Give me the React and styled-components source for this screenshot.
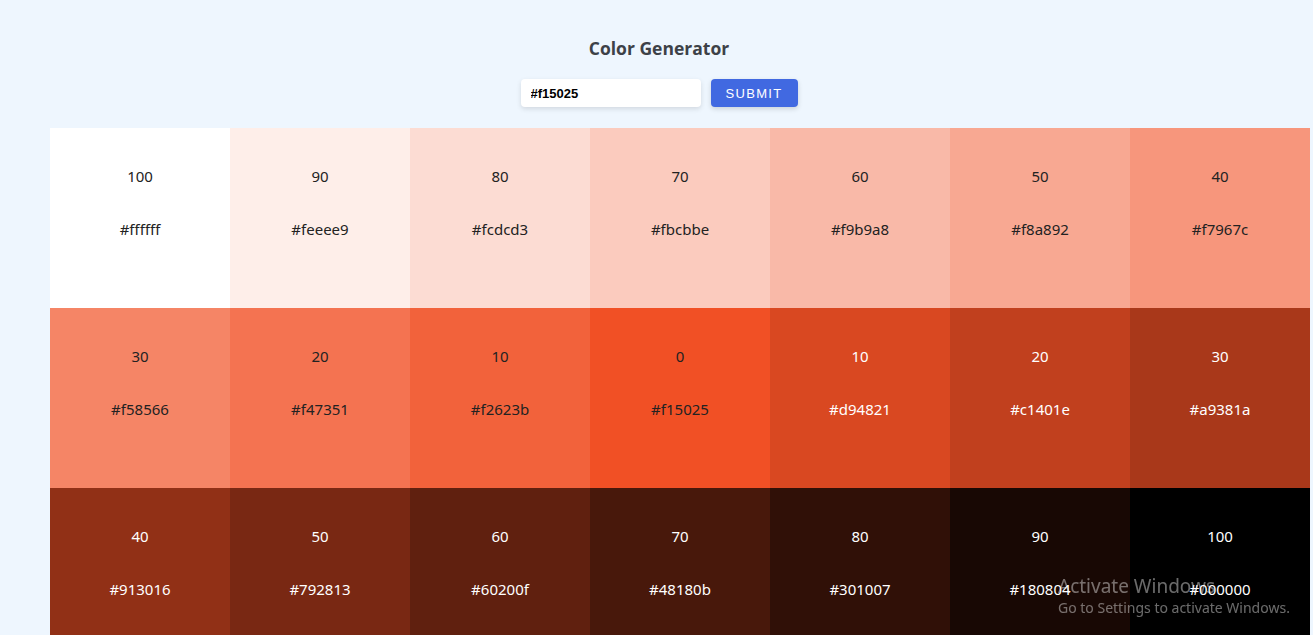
import React, { useState } from 'react'
import styled, { createGlobalStyle } from 'styled-components'

const GlobalStyle = createGlobalStyle`
  * { box-sizing: border-box; }
  body {
    margin: 0;
    background: #eef6fe;
    font-family: "Noto Sans", "Open Sans", sans-serif;
    overflow: hidden;
  }
`

const tints = ['ffffff', 'feeee9', 'fcdcd3', 'fbcbbe', 'f9b9a8', 'f8a892', 'f7967c', 'f58566', 'f47351', 'f2623b']
const shades = ['d94821', 'c1401e', 'a9381a', '913016', '792813', '60200f', '48180b', '301007', '180804', '000000']

const colors = [
  ...tints.map((hex, i) => ({ hex, weight: (10 - i) * 10, light: false })),
  { hex: 'f15025', weight: 0, light: false },
  ...shades.map((hex, i) => ({ hex, weight: (i + 1) * 10, light: true })),
]

const App = () => {
  const [value, setValue] = useState('#f15025')
  return (
    <Page>
      <GlobalStyle />
      <Header>
        <h3>Color Generator</h3>
        <Form onSubmit={(e) => e.preventDefault()}>
          <Input value={value} onChange={(e) => setValue(e.target.value)} />
          <SubmitBtn type="submit">SUBMIT</SubmitBtn>
        </Form>
      </Header>
      <Grid>
        {colors.map((c, idx) => (
          <Swatch key={idx} $bg={`#${c.hex}`} $light={c.light}>
            <p>{c.weight}</p>
            <p>#{c.hex}</p>
          </Swatch>
        ))}
      </Grid>
      <Watermark>
        <div className="big">Activate Windows</div>
        <div className="small">Go to Settings to activate Windows.</div>
      </Watermark>
    </Page>
  )
}

const Page = styled.main`
  height: 635px;
  overflow: hidden;
`

const Header = styled.section`
  display: flex;
  flex-direction: column;
  align-items: center;
  padding: 37px 0 21px 5px;

  h3 {
    margin: 0;
    font-family: "Open Sans", sans-serif;
    font-size: 17.5px;
    font-weight: 700;
    color: #3d4147;
    line-height: 22px;
  }
`

const Form = styled.form`
  display: flex;
  gap: 10px;
  margin-top: 20px;
`

const Input = styled.input`
  width: 180px;
  height: 28px;
  border: none;
  border-radius: 4px;
  background: #fff;
  padding: 0 10px;
  font-family: "Liberation Sans", Arial, sans-serif;
  font-weight: 700;
  font-size: 13px;
  color: #000;
  box-shadow: 0 2px 5px rgba(0, 0, 0, 0.12);
  outline: none;
`

const SubmitBtn = styled.button`
  width: 87px;
  height: 28px;
  border: none;
  border-radius: 4px;
  background: #4169e1;
  color: #fff;
  font-family: "Liberation Sans", Arial, sans-serif;
  font-size: 13px;
  letter-spacing: 1.3px;
  box-shadow: 0 2px 5px rgba(0, 0, 0, 0.15);
  cursor: pointer;
`

const Grid = styled.section`
  display: grid;
  grid-template-columns: repeat(7, 180px);
  grid-auto-rows: 180px;
  margin-left: 50px;
`

const Swatch = styled.article`
  background: ${({ $bg }) => $bg};
  color: ${({ $light }) => ($light ? '#fff' : '#222')};
  display: flex;
  flex-direction: column;
  align-items: center;
  padding-top: 37px;
  font-size: 15px;

  p {
    margin: 0;
    line-height: 22px;
  }
  p + p {
    margin-top: 31px;
  }
`

const Watermark = styled.div`
  position: fixed;
  left: 1058px;
  top: 574px;
  color: rgba(255, 255, 255, 0.42);
  font-family: "Noto Sans", sans-serif;
  pointer-events: none;

  .big {
    font-size: 19px;
    line-height: 24px;
  }
  .small {
    font-size: 14px;
    line-height: 20px;
  }
`

export default App
